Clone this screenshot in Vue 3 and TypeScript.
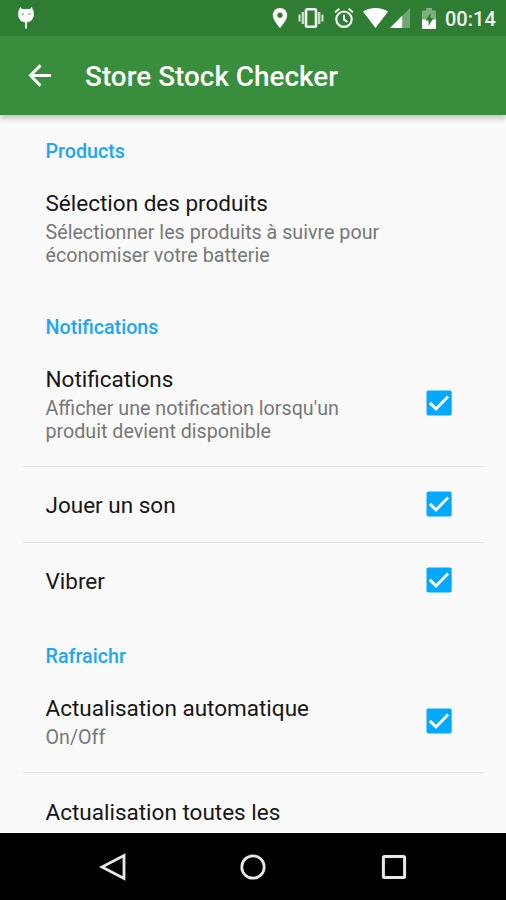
<script setup lang="ts">
interface Pref {
  title: string
  summary?: string[]
  checked?: boolean
  size: 'single' | 'double' | 'triple' | 'tall'
}
interface Section {
  name: string
  items: Pref[]
}

const sections: Section[] = [
  {
    name: 'Products',
    items: [
      {
        title: 'Sélection des produits',
        summary: ['Sélectionner les produits à suivre pour', 'économiser votre batterie'],
        size: 'triple',
      },
    ],
  },
  {
    name: 'Notifications',
    items: [
      {
        title: 'Notifications',
        summary: ["Afficher une notification lorsqu'un", 'produit devient disponible'],
        checked: true,
        size: 'triple',
      },
      { title: 'Jouer un son', checked: true, size: 'single' },
      { title: 'Vibrer', checked: true, size: 'single' },
    ],
  },
  {
    name: 'Rafraichr',
    items: [
      { title: 'Actualisation automatique', summary: ['On/Off'], checked: true, size: 'double' },
      { title: 'Actualisation toutes les', summary: ['Jamais'], size: 'tall' },
    ],
  },
]
</script>

<template>
  <div class="screen">
    <header class="status">
      <svg class="droid" viewBox="0 0 18 24" width="18" height="24">
        <path d="M3 1.500 4.600 4.500M15 1.500 13.400 4.500" stroke="#fff" stroke-width="1.600" />
        <path d="M2 3.600C3.600 2.900 5.500 3 9 3s5.400-.1 7 .6c.6 1.400.8 3.200.8 5 0 4.700-3.200 7.900-7.800 7.900S1.200 13.300 1.200 8.600c0-1.800.2-3.600.8-5z" fill="#fff" />
        <path d="M9 16v6.500" stroke="#f0f6f0" stroke-width="2" />
        <circle cx="5.600" cy="8" r="1.100" fill="#8bb98d" />
        <circle cx="12.400" cy="8" r="1.100" fill="#8bb98d" />
      </svg>
      <div class="tray">
        <svg class="pin" viewBox="0 0 16 20" width="16" height="20">
          <path fill="#fff" fill-rule="evenodd" d="M8 0C3.700 0 .8 3.200.8 7.200.8 12.300 8 20 8 20s7.200-7.700 7.200-12.800C15.200 3.200 12.300 0 8 0zm0 4.600a2.600 2.600 0 1 1 0 5.200 2.600 2.600 0 0 1 0-5.200z" />
        </svg>
        <svg class="vibrate" viewBox="0 0 26 20" width="26" height="20">
          <rect x="8" y="1.300" width="10" height="17.400" rx="1.200" fill="none" stroke="#f2f7f2" stroke-width="2.600" />
          <path d="M4.900 4v12M21.100 4v12" stroke="#c5dcc6" stroke-width="2.600" />
          <path d="M1.500 6.500v7M24.500 6.500v7" stroke="#d8e8d8" stroke-width="2" />
        </svg>
        <svg class="alarm" viewBox="0 0 20 20" width="20" height="20">
          <circle cx="10" cy="11.200" r="7.700" fill="none" stroke="#f2f7f2" stroke-width="2.200" />
          <path d="M1 4.300 5.300.8M19 4.300 14.700.8M10 6.700v5l3.400 2.200" fill="none" stroke="#f2f7f2" stroke-width="2" />
        </svg>
        <svg class="wifi" viewBox="0 0 25 20" width="25" height="20">
          <path d="M12.500 20 0 3.500C3.500 1.200 7.500 0 12.500 0S21.500 1.200 25 3.500z" fill="#fff" />
        </svg>
        <svg class="signal" viewBox="0 0 20 20" width="20" height="20">
          <path d="M20 0v20H0z" fill="#6fa671" />
          <path d="M12.200 7.800V20H0z" fill="#fff" />
        </svg>
        <svg class="battery" viewBox="0 0 14 21" width="14" height="21">
          <path d="M4 0h6v2.500h3a1 1 0 0 1 1 1V21H0V3.500a1 1 0 0 1 1-1h3z" fill="#7fb081" />
          <path d="M0 11.500h14V20a1 1 0 0 1-1 1H1a1 1 0 0 1-1-1z" fill="#fff" />
          <path d="M8.500 5 3.500 12.500h3V18l5-8h-3z" fill="#2e7d32" />
        </svg>
        <span class="clock">00:14</span>
      </div>
    </header>

    <div class="toolbar">
      <svg class="back" viewBox="0 0 24 24" width="24" height="24">
        <path d="M23 11.500H3M12.500 1.400 2.400 11.500l10.100 10.100" fill="none" stroke="#fff" stroke-width="2.900" />
      </svg>
      <h1>Store Stock Checker</h1>
    </div>

    <main class="list">
      <section v-for="section in sections" :key="section.name">
        <h2>{{ section.name }}</h2>
        <div v-for="item in section.items" :key="item.title" class="row" :class="item.size">
          <div class="copy">
            <div class="title">{{ item.title }}</div>
            <div v-for="line in item.summary" :key="line" class="summary">{{ line }}</div>
          </div>
          <svg v-if="item.checked" class="check" viewBox="0 0 26 26" width="26" height="26">
            <rect x=".5" y=".4" width="25.200" height="25.200" rx="1.800" fill="#03a9ff" />
            <path d="m3.900 12.900 6.100 6L22.100 6.500" fill="none" stroke="#fff" stroke-width="2.900" />
          </svg>
        </div>
      </section>
    </main>

    <nav class="navbar">
      <svg viewBox="0 0 28 28" width="28" height="28">
        <path d="M25 2.600v22.800L3 14z" fill="none" stroke="#e8e8e8" stroke-width="2.800" stroke-linejoin="miter" />
      </svg>
      <svg viewBox="0 0 28 28" width="28" height="28">
        <circle cx="14" cy="14" r="11.200" fill="none" stroke="#e8e8e8" stroke-width="2.800" />
      </svg>
      <svg viewBox="0 0 28 28" width="28" height="28">
        <rect x="3.400" y="3.400" width="21.200" height="21.200" rx="1" fill="none" stroke="#e8e8e8" stroke-width="3" />
      </svg>
    </nav>
  </div>
</template>

<style>
body {
  margin: 0;
}
</style>

<style scoped>
.screen {
  width: 506px;
  height: 900px;
  display: flex;
  flex-direction: column;
  overflow: hidden;
  background: #fafafa;
  font-family: Roboto, 'Liberation Sans', sans-serif;
}
svg {
  display: block;
  flex: none;
}
.status {
  flex: none;
  box-sizing: border-box;
  height: 36px;
  padding: 0 10px 0 17px;
  display: flex;
  align-items: center;
  justify-content: space-between;
  background: #2e7d32;
}
.tray {
  display: flex;
  align-items: center;
}
.vibrate {
  margin-left: 10px;
}
.alarm {
  margin-left: 10px;
}
.wifi {
  margin-left: 9px;
}
.signal {
  margin-left: 2px;
}
.battery {
  margin-left: 12px;
}
.clock {
  margin: 2px 0 0 9px;
  width: 51px;
  font-size: 20px;
  line-height: 34px;
  font-weight: 500;
  color: #f2f7f2;
  white-space: nowrap;
}
.toolbar {
  position: relative;
  flex: none;
  box-sizing: border-box;
  height: 79px;
  padding-left: 28px;
  display: flex;
  align-items: center;
  background: #388e3c;
  box-shadow: 0 4px 5px rgba(0, 0, 0, 0.2);
}
h1 {
  margin: 2px 0 0 33px;
  font-size: 27.900px;
  font-weight: 500;
  line-height: 36px;
  color: #fff;
  white-space: nowrap;
}
.list {
  flex: 1;
  min-height: 0;
  overflow: hidden;
}
section:first-child {
  margin-top: -1px;
}
h2 {
  margin: 0;
  box-sizing: border-box;
  height: 54px;
  padding: 26px 0 0 45.500px;
  font-size: 19.700px;
  font-weight: 500;
  line-height: 24px;
  color: #1ba7f5;
}
section:last-child h2 {
  padding-top: 27px;
}
.row {
  box-sizing: border-box;
  margin: 0 22px 0 23px;
  padding: 0 32px 0 22.500px;
  display: flex;
  align-items: center;
  justify-content: space-between;
}
.row + .row {
  border-top: 1px solid #e2e2e2;
}
.single {
  height: 76px;
}
.double {
  height: 100px;
}
.triple {
  height: 122px;
}
.tall {
  height: 108px;
}
.title {
  font-size: 22.500px;
  line-height: 30px;
  color: #161616;
  white-space: nowrap;
}
.double .copy,
.triple .copy,
.tall .copy {
  padding-bottom: 3px;
}
.double .title,
.triple .title,
.tall .title {
  margin-bottom: 3px;
}
.summary {
  font-size: 19.700px;
  line-height: 23px;
  color: #777;
  white-space: nowrap;
}
.single .check {
  margin-bottom: 1px;
}
.double .check {
  margin-bottom: 2px;
}
.triple .check {
  margin-bottom: 4px;
}
.navbar {
  flex: none;
  height: 67px;
  padding: 0 42px 0 43px;
  display: flex;
  align-items: center;
  justify-content: space-around;
  background: #000;
}
</style>
